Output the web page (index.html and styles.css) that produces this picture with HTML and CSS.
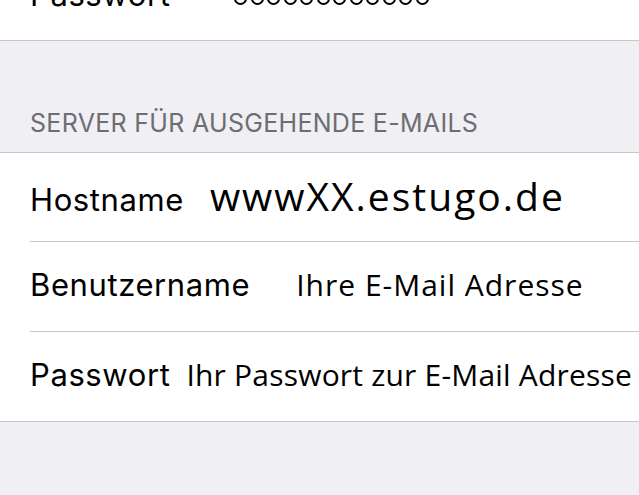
FILE: index.html
```html
<!DOCTYPE html>
<html lang="de">
<head>
<meta charset="utf-8">
<link rel="stylesheet" href="styles.css">
</head>
<body>
<div class="group group-top">
  <div class="row">
    <span class="label">Passwort</span>
    <span class="dots"><i></i><i></i><i></i><i></i><i></i><i></i><i></i><i></i><i></i><i></i><i></i><i></i></span>
  </div>
</div>
<div class="section-header">SERVER FÜR AUSGEHENDE E-MAILS</div>
<div class="group">
  <div class="row row-short">
    <span class="label">Hostname</span>
    <span class="value value-host">wwwXX.estugo.de</span>
  </div>
  <div class="row">
    <span class="label">Benutzername</span>
    <span class="value value-user">Ihre E-Mail Adresse</span>
  </div>
  <div class="row">
    <span class="label">Passwort</span>
    <span class="value value-pass">Ihr Passwort zur E-Mail Adresse</span>
  </div>
</div>
</body>
</html>
```
FILE: styles.css
```css
html, body {
  margin: 0;
  padding: 0;
}
body {
  background: #efeff4;
  font-family: Inter, "Noto Sans", sans-serif;
  overflow: hidden;
}
.group {
  background: #fff;
  border-top: 1px solid #c8c7cc;
  border-bottom: 1px solid #c8c7cc;
  padding-left: 30px;
}
.group-top {
  border-top: none;
  margin-top: -48px;
}
.group-top .row {
  height: 88px;
}
.row {
  height: 89px;
  display: flex;
  align-items: baseline;
  white-space: nowrap;
  border-bottom: 1px solid #c8c7cc;
}
.row-short {
  height: 88px;
}
.row > * {
  padding-top: 23px;
}
.row:last-child {
  border-bottom: none;
}
.label {
  font-size: 31px;
  line-height: 40px;
  color: #000;
  letter-spacing: 0.6px;
}
.dots {
  margin-left: 64px;
  display: flex;
  gap: 3.5px;
  position: relative;
  top: -1px;
}
.dots i {
  display: inline-block;
  box-sizing: border-box;
  width: 13px;
  height: 13px;
  border-radius: 50%;
  border: 2.5px solid #000;
}
.section-header {
  height: 111px;
  box-sizing: border-box;
  display: flex;
  align-items: flex-end;
  padding: 0 0 14px 30px;
  font-size: 25px;
  line-height: 30px;
  color: #6d6d72;
  letter-spacing: 0.3px;
}
.value {
  font-family: "Open Sans", "Noto Sans", sans-serif;
  line-height: 40px;
  color: #000;
}
.value-host {
  margin-left: 26px;
  font-size: 39px;
  letter-spacing: 2px;
}
.value-user {
  margin-left: 46px;
  font-size: 30px;
  letter-spacing: 1px;
}
.value-pass {
  margin-left: 16px;
  font-size: 30px;
  letter-spacing: 0.2px;
}
```
